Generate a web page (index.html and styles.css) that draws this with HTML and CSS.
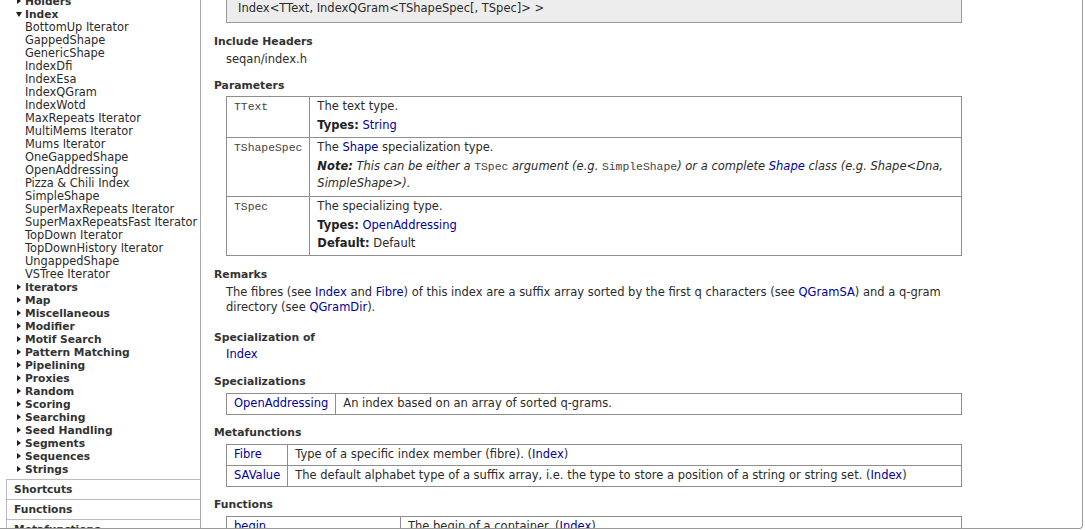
FILE: index.html
```html
<!DOCTYPE html>
<html>
<head>
<meta charset="utf-8">
<title>IndexQGram</title>
<link rel="stylesheet" href="styles.css">
</head>
<body>
<div class="window">
  <nav class="sidebar">
    <div class="tree">
      <div class="row group"><span class="tri"><span class="right"></span></span>Holders</div>
      <div class="row group"><span class="tri"><span class="down"></span></span>Index</div>
      <div class="row leaf">BottomUp Iterator</div>
      <div class="row leaf">GappedShape</div>
      <div class="row leaf">GenericShape</div>
      <div class="row leaf">IndexDfi</div>
      <div class="row leaf">IndexEsa</div>
      <div class="row leaf">IndexQGram</div>
      <div class="row leaf">IndexWotd</div>
      <div class="row leaf">MaxRepeats Iterator</div>
      <div class="row leaf">MultiMems Iterator</div>
      <div class="row leaf">Mums Iterator</div>
      <div class="row leaf">OneGappedShape</div>
      <div class="row leaf">OpenAddressing</div>
      <div class="row leaf">Pizza &amp; Chili Index</div>
      <div class="row leaf">SimpleShape</div>
      <div class="row leaf">SuperMaxRepeats Iterator</div>
      <div class="row leaf">SuperMaxRepeatsFast Iterator</div>
      <div class="row leaf">TopDown Iterator</div>
      <div class="row leaf">TopDownHistory Iterator</div>
      <div class="row leaf">UngappedShape</div>
      <div class="row leaf">VSTree Iterator</div>
      <div class="row group"><span class="tri"><span class="right"></span></span>Iterators</div>
      <div class="row group"><span class="tri"><span class="right"></span></span>Map</div>
      <div class="row group"><span class="tri"><span class="right"></span></span>Miscellaneous</div>
      <div class="row group"><span class="tri"><span class="right"></span></span>Modifier</div>
      <div class="row group"><span class="tri"><span class="right"></span></span>Motif Search</div>
      <div class="row group"><span class="tri"><span class="right"></span></span>Pattern Matching</div>
      <div class="row group"><span class="tri"><span class="right"></span></span>Pipelining</div>
      <div class="row group"><span class="tri"><span class="right"></span></span>Proxies</div>
      <div class="row group"><span class="tri"><span class="right"></span></span>Random</div>
      <div class="row group"><span class="tri"><span class="right"></span></span>Scoring</div>
      <div class="row group"><span class="tri"><span class="right"></span></span>Searching</div>
      <div class="row group"><span class="tri"><span class="right"></span></span>Seed Handling</div>
      <div class="row group"><span class="tri"><span class="right"></span></span>Segments</div>
      <div class="row group"><span class="tri"><span class="right"></span></span>Sequences</div>
      <div class="row group"><span class="tri"><span class="right"></span></span>Strings</div>
    </div>
    <div class="box">Shortcuts</div>
    <div class="box">Functions</div>
    <div class="box">Metafunctions</div>
  </nav>

  <main class="main">
    <div class="code">Index&lt;TText, IndexQGram&lt;TShapeSpec[, TSpec]&gt; &gt;</div>

    <section class="sec">
      <h3 class="hd">Include Headers</h3>
      <div class="ind txt">seqan/index.h</div>
    </section>

    <section class="sec">
      <h3 class="hd">Parameters</h3>
      <div class="ind">
        <table class="tbl params">
          <tr>
            <td class="k"><span class="m">TText</span></td>
            <td>
              <div class="p">The text type.</div>
              <div class="p"><b>Types:</b> <a class="l">String</a></div>
            </td>
          </tr>
          <tr>
            <td class="k"><span class="m">TShapeSpec</span></td>
            <td>
              <div class="p">The <a class="l">Shape</a> specialization type.</div>
              <div class="p note"><b>Note:</b> This can be either a <span class="m up">TSpec</span> argument (e.g. <span class="m up">SimpleShape</span>) or a complete <a class="l">Shape</a> class (e.g. Shape&lt;Dna,<br>SimpleShape&gt;).</div>
            </td>
          </tr>
          <tr>
            <td class="k"><span class="m">TSpec</span></td>
            <td>
              <div class="p">The specializing type.</div>
              <div class="p"><b>Types:</b> <a class="l">OpenAddressing</a></div>
              <div class="p"><b>Default:</b> Default</div>
            </td>
          </tr>
        </table>
      </div>
    </section>

    <section class="sec">
      <h3 class="hd">Remarks</h3>
      <div class="ind txt remarks">The fibres (see <a class="l">Index</a> and <a class="l">Fibre</a>) of this index are a suffix array sorted by the first q characters (see <a class="l">QGramSA</a>) and a q-gram<br>directory (see <a class="l">QGramDir</a>).</div>
    </section>

    <section class="sec">
      <h3 class="hd hd-tight">Specialization of</h3>
      <div class="ind txt specof"><a class="l">Index</a></div>
    </section>

    <section class="sec">
      <h3 class="hd">Specializations</h3>
      <div class="ind">
        <table class="tbl">
          <tr>
            <td class="k"><a class="l">OpenAddressing</a></td>
            <td>An index based on an array of sorted q-grams.</td>
          </tr>
        </table>
      </div>
    </section>

    <section class="sec">
      <h3 class="hd">Metafunctions</h3>
      <div class="ind">
        <table class="tbl">
          <tr>
            <td class="k"><a class="l">Fibre</a></td>
            <td>Type of a specific index member (fibre). (<a class="l">Index</a>)</td>
          </tr>
          <tr>
            <td class="k"><a class="l">SAValue</a></td>
            <td>The default alphabet type of a suffix array, i.e. the type to store a position of a string or string set. (<a class="l">Index</a>)</td>
          </tr>
        </table>
      </div>
    </section>

    <section class="sec">
      <h3 class="hd">Functions</h3>
      <div class="ind">
        <table class="tbl">
          <tr>
            <td class="k kfunc"><a class="l">begin</a></td>
            <td>The begin of a container. (<a class="l">Index</a>)</td>
          </tr>
        </table>
      </div>
    </section>
  </main>
</div>
</body>
</html>
```

FILE: styles.css
```css
html, body {
  margin: 0;
  padding: 0;
  background: #ffffff;
}

body {
  font-family: "DejaVu Sans", Verdana, sans-serif;
  color: #2b2b2b;
  width: 1085px;
  height: 530px;
  overflow: hidden;
}

.window {
  box-sizing: border-box;
  width: 1083px;
  height: 529px;
  border-right: 1px solid #9a9a9a;
  border-bottom: 1px solid #9a9a9a;
  border-bottom-right-radius: 4px;
  display: flex;
  overflow: hidden;
}

/* ---------- sidebar ---------- */
.sidebar {
  box-sizing: border-box;
  width: 201px;
  flex: none;
  border-right: 1px solid #a8a8a8;
}

.tree {
  margin-top: -5.5px;
  padding-bottom: 3.5px;
}

.row {
  display: flex;
  align-items: center;
  height: 13px;
  line-height: 13px;
  white-space: nowrap;
  color: #2b2b2b;
}

.leaf {
  padding-left: 25px;
  font-size: 11.4px;
}

.group {
  padding-left: 15px;
  font-size: 10.7px;
  font-weight: bold;
  color: #333333;
}

.tri {
  width: 10px;
  height: 13px;
  flex: none;
  display: flex;
  align-items: center;
}

.right {
  width: 0;
  height: 0;
  margin-left: 2px;
  border-left: 4px solid #1e1e1e;
  border-top: 3.5px solid transparent;
  border-bottom: 3.5px solid transparent;
}

.down {
  width: 0;
  height: 0;
  margin-left: 1px;
  margin-top: 1px;
  border-top: 5px solid #1e1e1e;
  border-left: 3px solid transparent;
  border-right: 3px solid transparent;
}

.box {
  margin-left: 6px;
  border-left: 1px solid #bcbcbc;
  border-top: 1px solid #bcbcbc;
  padding: 3px 0 3px 7px;
  height: 13px;
  line-height: 13px;
  font-size: 10.7px;
  font-weight: bold;
  color: #333333;
  white-space: nowrap;
}

/* ---------- main ---------- */
.main {
  flex: 1;
  min-width: 0;
  padding: 0 120px 0 13px;
  font-size: 11.5px;
  line-height: 15px;
}

.code {
  margin: -6px 0 0 12px;
  border: 1px solid #9a9a9a;
  background: #ededed;
  padding: 6px 11px;
  line-height: 15px;
  color: #2b2b2b;
}

.sec {
  margin-top: 10.5px;
}

.hd {
  margin: 0;
  padding-bottom: 3.5px;
  font-size: 10.8px;
  line-height: 15px;
  font-weight: bold;
  color: #333333;
}

.hd-tight {
  padding-bottom: 2px;
}

.ind {
  margin-left: 12px;
}

.txt {
  line-height: 15px;
}

.remarks {
  padding-bottom: 4.5px;
}

.specof {
  padding-bottom: 1.5px;
}

.l {
  color: #000099;
  text-decoration: none;
}

.m {
  font-family: "Liberation Mono", "Courier New", monospace;
  font-size: 11.4px;
  line-height: 1;
  color: #444444;
}

.up {
  font-style: normal;
}

b {
  color: #222222;
}

/* ---------- tables ---------- */
.tbl {
  width: 100%;
  border-collapse: collapse;
}

.tbl td {
  border: 1px solid #8e8e8e;
  padding: 2.5px 7px;
  vertical-align: top;
  line-height: 15px;
}

.tbl .k {
  width: 1px;
  white-space: nowrap;
}

.tbl .kfunc {
  width: 159px;
}

.params td {
  padding: 2px 7px 4px 7px;
}

.p + .p {
  margin-top: 3.5px;
}

.note {
  font-style: italic;
  line-height: 17px;
}
```
